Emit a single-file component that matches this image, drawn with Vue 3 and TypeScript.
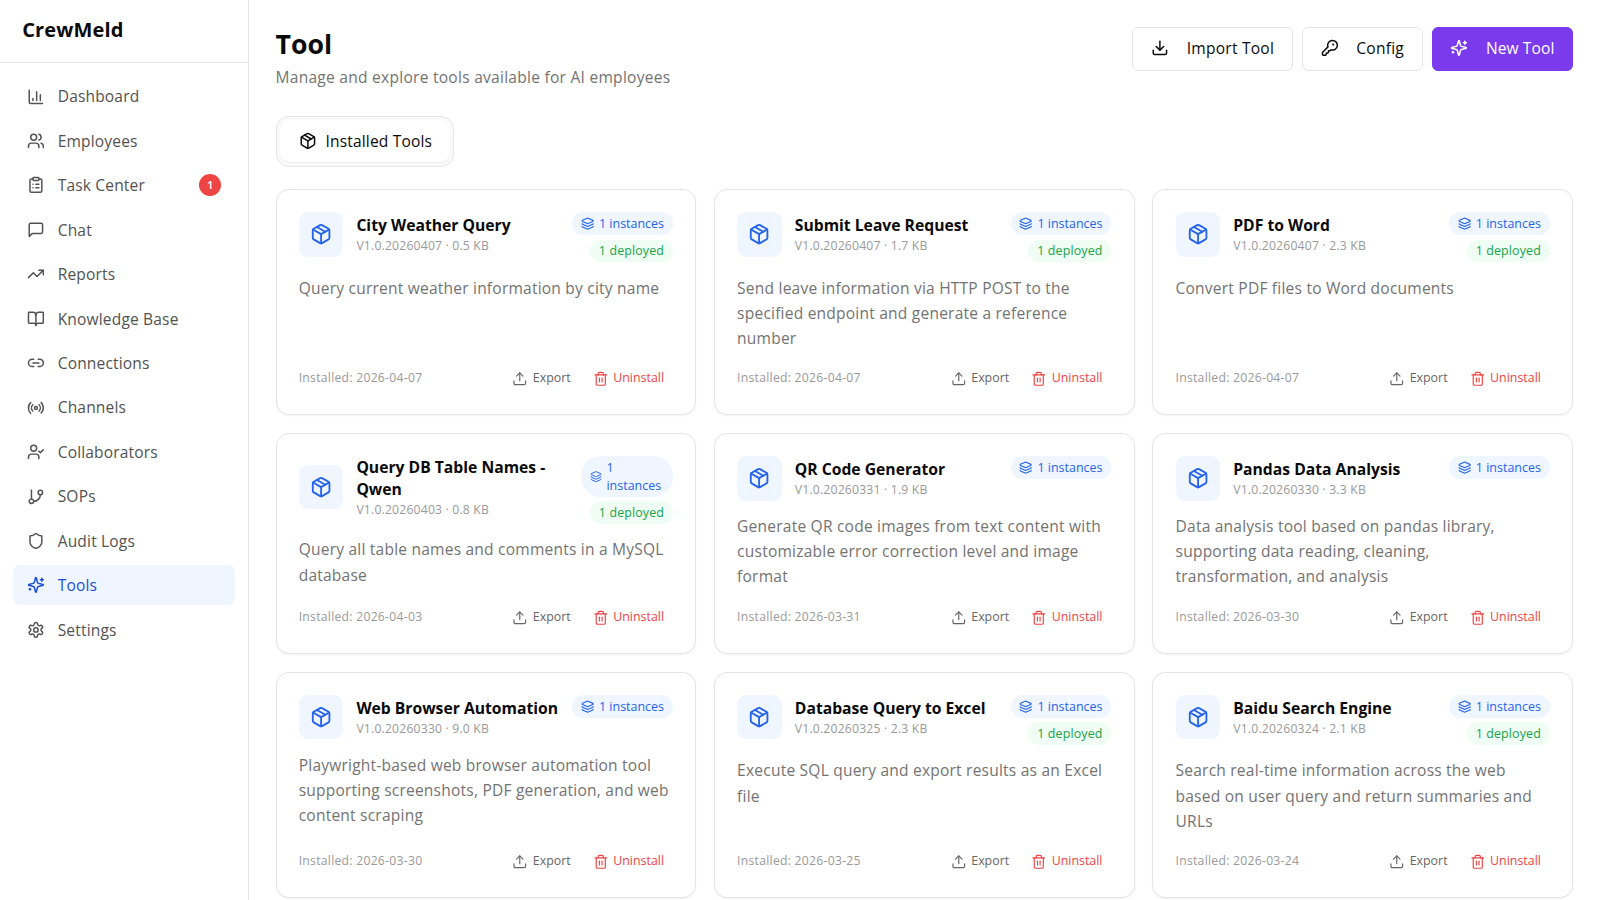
<script setup lang="ts">
import { defineComponent, h } from 'vue'

const icons: Record<string, string> = {
  chart: '<path d="M3 3v16a2 2 0 0 0 2 2h16"/><path d="M18 17V9"/><path d="M13 17V5"/><path d="M8 17v-3"/>',
  users: '<path d="M16 21v-2a4 4 0 0 0-4-4H6a4 4 0 0 0-4 4v2"/><circle cx="9" cy="7" r="4"/><path d="M22 21v-2a4 4 0 0 0-3-3.87"/><path d="M16 3.13a4 4 0 0 1 0 7.75"/>',
  clipboard: '<rect x="8" y="2" width="8" height="4" rx="1"/><path d="M16 4h2a2 2 0 0 1 2 2v14a2 2 0 0 1-2 2H6a2 2 0 0 1-2-2V6a2 2 0 0 1 2-2h2"/><path d="M12 11h4"/><path d="M12 16h4"/><path d="M8 11h.01"/><path d="M8 16h.01"/>',
  message: '<path d="M21 15a2 2 0 0 1-2 2H7l-4 4V5a2 2 0 0 1 2-2h14a2 2 0 0 1 2 2z"/>',
  trend: '<path d="M22 7l-8.5 8.5-5-5L2 17"/><path d="M16 7h6v6"/>',
  book: '<path d="M12 7v14"/><path d="M3 18a1 1 0 0 1-1-1V4a1 1 0 0 1 1-1h5a4 4 0 0 1 4 4 4 4 0 0 1 4-4h5a1 1 0 0 1 1 1v13a1 1 0 0 1-1 1h-6a3 3 0 0 0-3 3 3 3 0 0 0-3-3z"/>',
  link: '<path d="M9 17H7A5 5 0 0 1 7 7h2"/><path d="M15 7h2a5 5 0 1 1 0 10h-2"/><path d="M8 12h8"/>',
  radio: '<path d="M4.9 19.1C1 15.2 1 8.8 4.9 4.9"/><path d="M7.8 16.2c-2.3-2.3-2.3-6.1 0-8.5"/><circle cx="12" cy="12" r="2"/><path d="M16.2 7.8c2.3 2.3 2.3 6.1 0 8.5"/><path d="M19.1 4.9C23 8.8 23 15.1 19.1 19"/>',
  userCheck: '<path d="M16 21v-2a4 4 0 0 0-4-4H6a4 4 0 0 0-4 4v2"/><circle cx="9" cy="7" r="4"/><path d="M16 11l2 2 4-4"/>',
  branch: '<path d="M6 3v12"/><circle cx="18" cy="6" r="3"/><circle cx="6" cy="18" r="3"/><path d="M18 9a9 9 0 0 1-9 9"/>',
  shield: '<path d="M20 13c0 5-3.5 7.5-7.66 8.95a1 1 0 0 1-.67-.01C7.5 20.5 4 18 4 13V6a1 1 0 0 1 1-1c2 0 4.5-1.2 6.24-2.72a1.17 1.17 0 0 1 1.52 0C14.51 3.81 17 5 19 5a1 1 0 0 1 1 1z"/>',
  sparkles: '<path d="M9.937 15.5A2 2 0 0 0 8.5 14.063l-6.135-1.582a.5.5 0 0 1 0-.962L8.5 9.936A2 2 0 0 0 9.937 8.5l1.582-6.135a.5.5 0 0 1 .963 0L14.063 8.5A2 2 0 0 0 15.5 9.937l6.135 1.581a.5.5 0 0 1 0 .964L15.5 14.063a2 2 0 0 0-1.437 1.437l-1.582 6.135a.5.5 0 0 1-.963 0z"/><path d="M20 3v4"/><path d="M22 5h-4"/><path d="M4 17v2"/><path d="M5 18H3"/>',
  settings: '<path d="M12.22 2h-.44a2 2 0 0 0-2 2v.18a2 2 0 0 1-1 1.73l-.43.25a2 2 0 0 1-2 0l-.15-.08a2 2 0 0 0-2.73.73l-.22.38a2 2 0 0 0 .73 2.73l.15.1a2 2 0 0 1 1 1.72v.51a2 2 0 0 1-1 1.74l-.15.09a2 2 0 0 0-.73 2.73l.22.38a2 2 0 0 0 2.73.73l.15-.08a2 2 0 0 1 2 0l.43.25a2 2 0 0 1 1 1.73V20a2 2 0 0 0 2 2h.44a2 2 0 0 0 2-2v-.18a2 2 0 0 1 1-1.73l.43-.25a2 2 0 0 1 2 0l.15.08a2 2 0 0 0 2.73-.73l.22-.39a2 2 0 0 0-.73-2.73l-.15-.08a2 2 0 0 1-1-1.74v-.5a2 2 0 0 1 1-1.74l.15-.09a2 2 0 0 0 .73-2.73l-.22-.38a2 2 0 0 0-2.73-.73l-.15.08a2 2 0 0 1-2 0l-.43-.25a2 2 0 0 1-1-1.73V4a2 2 0 0 0-2-2z"/><circle cx="12" cy="12" r="3"/>',
  box: '<path d="M11 21.73a2 2 0 0 0 2 0l7-4A2 2 0 0 0 21 16V8a2 2 0 0 0-1-1.73l-7-4a2 2 0 0 0-2 0l-7 4A2 2 0 0 0 3 8v8a2 2 0 0 0 1 1.73z"/><path d="M12 22V12"/><path d="M3.29 7L12 12l8.71-5"/><path d="M7.5 4.27l9 5.15"/>',
  layers: '<path d="M12.83 2.18a2 2 0 0 0-1.66 0L2.6 6.08a1 1 0 0 0 0 1.83l8.58 3.91a2 2 0 0 0 1.66 0l8.58-3.9a1 1 0 0 0 0-1.83z"/><path d="M2 12a1 1 0 0 0 .58.91l8.6 3.91a2 2 0 0 0 1.65 0l8.58-3.9A1 1 0 0 0 22 12"/><path d="M2 17a1 1 0 0 0 .58.91l8.6 3.91a2 2 0 0 0 1.65 0l8.58-3.9A1 1 0 0 0 22 17"/>',
  upload: '<path d="M12 3v12"/><path d="M17 8l-5-5-5 5"/><path d="M21 15v4a2 2 0 0 1-2 2H5a2 2 0 0 1-2-2v-4"/>',
  download: '<path d="M12 15V3"/><path d="M7 10l5 5 5-5"/><path d="M21 15v4a2 2 0 0 1-2 2H5a2 2 0 0 1-2-2v-4"/>',
  key: '<path d="M2.586 17.414A2 2 0 0 0 2 18.828V21a1 1 0 0 0 1 1h3a1 1 0 0 0 1-1v-1a1 1 0 0 1 1-1h1a1 1 0 0 0 1-1v-1a1 1 0 0 1 1-1h.172a2 2 0 0 0 1.414-.586l.814-.814a6.5 6.5 0 1 0-4-4z"/><circle cx="16.5" cy="7.5" r=".5" fill="currentColor"/>',
  trash: '<path d="M3 6h18"/><path d="M19 6v14c0 1-1 2-2 2H7c-1 0-2-1-2-2V6"/><path d="M8 6V4c0-1 1-2 2-2h4c1 0 2 1 2 2v2"/><path d="M10 11v6"/><path d="M14 11v6"/>',
}

const Icon = defineComponent({
  props: { name: { type: String, required: true }, stroke: { type: Number, default: 2 } },
  setup(props) {
    return () =>
      h('svg', {
        viewBox: '0 0 24 24',
        fill: 'none',
        stroke: 'currentColor',
        'stroke-width': props.stroke,
        'stroke-linecap': 'round',
        'stroke-linejoin': 'round',
        innerHTML: icons[props.name],
      })
  },
})

interface NavItem { label: string; icon: string; badge?: number; active?: boolean }
const nav: NavItem[] = [
  { label: 'Dashboard', icon: 'chart' },
  { label: 'Employees', icon: 'users' },
  { label: 'Task Center', icon: 'clipboard', badge: 1 },
  { label: 'Chat', icon: 'message' },
  { label: 'Reports', icon: 'trend' },
  { label: 'Knowledge Base', icon: 'book' },
  { label: 'Connections', icon: 'link' },
  { label: 'Channels', icon: 'radio' },
  { label: 'Collaborators', icon: 'userCheck' },
  { label: 'SOPs', icon: 'branch' },
  { label: 'Audit Logs', icon: 'shield' },
  { label: 'Tools', icon: 'sparkles', active: true },
  { label: 'Settings', icon: 'settings' },
]

interface Tool { name: string; version: string; size: string; deployed: boolean; desc: string[]; date: string; narrow?: boolean }
const tools: Tool[] = [
  { name: 'City Weather Query', version: '20260407', size: '0.5', deployed: true, desc: ['Query current weather information by city name'], date: '2026-04-07' },
  { name: 'Submit Leave Request', version: '20260407', size: '1.7', deployed: true, desc: ['Send leave information via HTTP POST to the', 'specified endpoint and generate a reference', 'number'], date: '2026-04-07' },
  { name: 'PDF to Word', version: '20260407', size: '2.3', deployed: true, desc: ['Convert PDF files to Word documents'], date: '2026-04-07' },
  { name: 'Query DB Table Names - Qwen', version: '20260403', size: '0.8', deployed: true, desc: ['Query all table names and comments in a MySQL', 'database'], date: '2026-04-03', narrow: true },
  { name: 'QR Code Generator', version: '20260331', size: '1.9', deployed: false, desc: ['Generate QR code images from text content with', 'customizable error correction level and image', 'format'], date: '2026-03-31' },
  { name: 'Pandas Data Analysis', version: '20260330', size: '3.3', deployed: false, desc: ['Data analysis tool based on pandas library,', 'supporting data reading, cleaning,', 'transformation, and analysis'], date: '2026-03-30' },
  { name: 'Web Browser Automation', version: '20260330', size: '9.0', deployed: false, desc: ['Playwright-based web browser automation tool', 'supporting screenshots, PDF generation, and web', 'content scraping'], date: '2026-03-30' },
  { name: 'Database Query to Excel', version: '20260325', size: '2.3', deployed: true, desc: ['Execute SQL query and export results as an Excel', 'file'], date: '2026-03-25' },
  { name: 'Baidu Search Engine', version: '20260324', size: '2.1', deployed: true, desc: ['Search real-time information across the web', 'based on user query and return summaries and', 'URLs'], date: '2026-03-24' },
]
</script>

<template>
  <div class="layout">
    <aside class="sidebar">
      <div class="brand">CrewMeld</div>
      <nav class="nav">
        <a v-for="item in nav" :key="item.label" class="nav-item" :class="{ active: item.active }">
          <Icon class="icon" :name="item.icon" />
          <span>{{ item.label }}</span>
          <span v-if="item.badge" class="count">{{ item.badge }}</span>
        </a>
      </nav>
    </aside>

    <main class="main">
      <header class="header">
        <div class="heading">
          <h1>Tool</h1>
          <p class="subtitle">Manage and explore tools available for AI employees</p>
        </div>
        <div class="actions">
          <button class="btn"><Icon class="icon" name="download" />Import Tool</button>
          <button class="btn"><Icon class="icon" name="key" />Config</button>
          <button class="btn primary"><Icon class="icon" name="sparkles" />New Tool</button>
        </div>
      </header>

      <div class="tabs">
        <button class="tab"><Icon class="icon" name="box" />Installed Tools</button>
      </div>

      <section class="grid">
        <article v-for="tool in tools" :key="tool.name" class="card">
          <div class="card-head">
            <div class="ident">
              <div class="tile"><Icon class="tile-icon" name="box" /></div>
              <div>
                <h3>{{ tool.name }}</h3>
                <p class="meta">V1.0.{{ tool.version }} · {{ tool.size }} KB</p>
              </div>
            </div>
            <div class="badges">
              <span class="badge blue" :class="{ narrow: tool.narrow }"><Icon class="badge-icon" name="layers" /><span>1 instances</span></span>
              <span v-if="tool.deployed" class="badge green">1 deployed</span>
            </div>
          </div>
          <p class="desc"><span v-for="line in tool.desc" :key="line">{{ line }}</span></p>
          <footer class="card-foot">
            <span class="date">Installed: {{ tool.date }}</span>
            <div class="links">
              <button class="link"><Icon class="link-icon" name="upload" :stroke="1.8" />Export</button>
              <button class="link danger"><Icon class="link-icon" name="trash" :stroke="1.8" />Uninstall</button>
            </div>
          </footer>
        </article>
      </section>
    </main>
  </div>
</template>

<style>
html, body { margin: 0; overflow: hidden; background: #fff; }
</style>

<style scoped>
* { box-sizing: border-box; }
.layout {
  display: flex;
  height: 100vh;
  overflow: hidden;
  color: #0a0a0a;
  font: 15.56px/22.2px 'Open Sans', 'Noto Sans', sans-serif;
  letter-spacing: 0.16px;
}
h1, h3, p { margin: 0; }
button { font: inherit; letter-spacing: inherit; color: inherit; white-space: nowrap; background: none; border: 0; }
.icon { width: 17.8px; height: 17.8px; flex: none; }

.sidebar { width: 249px; flex: none; border-right: 1px solid #e5e5e5; }
.brand {
  display: flex;
  align-items: center;
  height: 63.2px;
  padding: 0 22.2px 1px;
  border-bottom: 1px solid #e5e5e5;
  font-size: 20px;
  font-weight: 700;
}
.nav { display: flex; flex-direction: column; gap: 4.44px; padding: 13.3px; }
.nav-item {
  display: flex;
  align-items: center;
  gap: 13.3px;
  height: 40px;
  padding: 0 13.3px;
  border-radius: 7px;
  color: #525252;
}
.nav-item.active { background: #eff6ff; color: #1d4ed8; }
.count {
  display: flex;
  align-items: center;
  justify-content: center;
  width: 22.2px;
  height: 22.2px;
  margin-left: auto;
  border-radius: 50%;
  background: #ef4444;
  color: #fff;
  font-size: 11.5px;
  font-weight: 600;
}

.main { flex: 1; min-width: 0; padding: 26.7px 27px 0 26.5px; }
.header { display: flex; justify-content: space-between; align-items: flex-start; height: 62.2px; }
.heading { margin-top: -1px; }
h1 { font-size: 26.67px; line-height: 35.6px; font-weight: 700; letter-spacing: 0; }
.subtitle { margin-top: 4.4px; color: #737373; letter-spacing: 0.26px; }
.actions { display: flex; gap: 8.9px; }
.btn {
  display: flex;
  align-items: center;
  gap: 17.8px;
  height: 44.4px;
  padding: 0 17.8px 1px;
  border: 1px solid #e5e5e5;
  border-radius: 6px;
  letter-spacing: 0.25px;
}
.btn.primary { padding: 0 17.6px 1px; background: #7c3aed; border-color: #7c3aed; color: #fff; letter-spacing: 0.1px; }

.tabs {
  display: flex;
  width: fit-content;
  height: 51px;
  margin: 26.7px 0 22.2px;
  padding: 3.4px;
  border: 1px solid #e5e5e5;
  border-radius: 13px;
  background: #fafafa;
}
.tab {
  display: flex;
  align-items: center;
  gap: 8.9px;
  padding: 0 17.9px 0 18.9px;
  border-radius: 10px;
  background: #fff;
  box-shadow: 0 1px 2px rgba(0, 0, 0, 0.06);
}

.grid { display: grid; grid-template-columns: repeat(3, minmax(0, 1fr)); gap: 17.8px; }
.card {
  display: flex;
  flex-direction: column;
  min-height: 221.1px;
  padding: 22.5px 22.2px 22.2px;
  border: 1px solid #e5e5e5;
  border-radius: 13px;
  background: #fff;
  box-shadow: 0 1px 2px rgba(0, 0, 0, 0.05);
}
.card-head { display: flex; justify-content: space-between; align-items: flex-start; gap: 6px; }
.ident { display: flex; align-items: center; gap: 13.3px; min-width: 0; }
.tile {
  display: flex;
  align-items: center;
  justify-content: center;
  width: 44.4px;
  height: 44.4px;
  flex: none;
  border-radius: 9px;
  background: #eff6ff;
  color: #2563eb;
}
.tile-icon { width: 22.2px; height: 22.2px; }
h3 { font-size: 15.7px; line-height: 22.2px; font-weight: 700; letter-spacing: 0; }
.meta { padding-top: 0.7px; margin-bottom: -0.7px; font-size: 12.2px; line-height: 17.8px; color: #999; letter-spacing: 0.19px; white-space: nowrap; }
.badges { display: flex; flex-direction: column; align-items: flex-end; gap: 4.5px; flex: none; }
.badge {
  display: flex;
  align-items: center;
  gap: 4.6px;
  padding: 2.9px 8.9px 2.1px;
  border-radius: 20px;
  font-size: 12.45px;
  line-height: 17.8px;
  letter-spacing: 0.02px;
  white-space: nowrap;
}
.badge.blue { background: #eff6ff; color: #2563eb; }
.badge.green { background: #f0fdf4; color: #16a34a; letter-spacing: 0.12px; }
.badge-icon { width: 13.3px; height: 13.3px; flex: none; }
.badge.narrow { width: 92px; white-space: normal; }
.badge.narrow .badge-icon { width: 12px; }
.desc {
  display: flex;
  flex-direction: column;
  margin: 13.3px 0 12.4px;
  line-height: 25.28px;
  color: #737373;
  letter-spacing: 0.21px;
  white-space: nowrap;
}
.card:nth-child(-n + 3) .desc,
.card:nth-child(n + 7) .desc { min-height: 75.9px; }
.card-foot { display: flex; align-items: center; justify-content: space-between; height: 27.8px; margin-top: auto; }
.date { font-size: 12.2px; color: #999; letter-spacing: 0.26px; }
.links { display: flex; gap: 4.4px; }
.link {
  display: flex;
  align-items: center;
  gap: 4.8px;
  padding: 0 8.9px;
  font-size: 12.4px;
  letter-spacing: 0;
  color: #666;
}
.link.danger { color: #ef4444; }
.link-icon { width: 15.56px; height: 15.56px; margin-top: 2px; }
</style>
